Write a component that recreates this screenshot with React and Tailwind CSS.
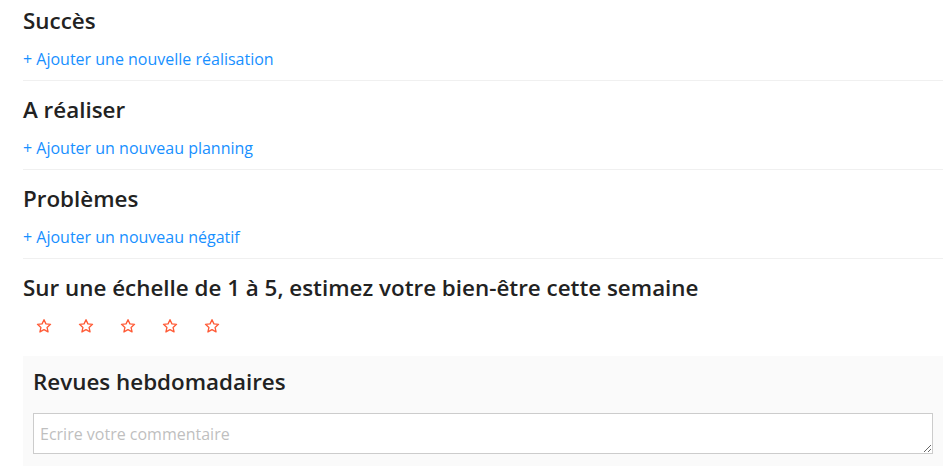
import React from "react";

const font = { fontFamily: '"Open Sans", "Noto Sans", sans-serif' };

function Star() {
  return (
    <svg width="16" height="16" viewBox="0 0 24 24" fill="none" stroke="#ff5a36" strokeWidth="2" strokeLinejoin="round">
      <path d="M12 2.5l2.9 6.3 6.9.7-5.2 4.6 1.5 6.8L12 17.4l-6.1 3.5 1.5-6.8-5.2-4.6 6.9-.7z" />
    </svg>
  );
}

function Section({ title, link, first }) {
  return (
    <div className={`${first ? "pt-[6px]" : "pt-[14px]"} pb-[9px] border-b border-[#f0f0f0]`}>
      <h2 className="text-[22.4px] leading-[30px] font-semibold text-[#222222]">{title}</h2>
      <div className="mt-[11px] text-[16px] leading-[24px] text-[#1890ff]">{link}</div>
    </div>
  );
}

export default function App() {
  return (
    <div className="w-[950px] h-[466px] overflow-hidden bg-white" style={font}>
      <div className="ml-[23px] w-[920px]">
        <Section first title="Succès" link="+ Ajouter une nouvelle réalisation" />
        <Section title="A réaliser" link="+ Ajouter un nouveau planning" />
        <Section title="Problèmes" link="+ Ajouter un nouveau négatif" />
        <div className="pt-[14px]">
          <h2 className="text-[22.4px] leading-[30px] font-semibold text-[#222222]">
            Sur une échelle de 1 à 5, estimez votre bien-être cette semaine
          </h2>
          <div className="mt-[15px] ml-[13px] flex gap-[26px]">
            <Star />
            <Star />
            <Star />
            <Star />
            <Star />
          </div>
        </div>
        <div className="mt-[22px] bg-[#fafafa] px-[10px] pt-[11px] pb-[20px]">
          <h2 className="text-[22.4px] leading-[30px] font-semibold text-[#222222]">Revues hebdomadaires</h2>
          <textarea
            className="mt-[16px] block w-[900px] h-[41px] border border-[#cccccc] bg-white px-[6px] pt-[8px] pb-[4px] text-[16px] leading-[24px] text-[#333] placeholder:text-[#bfbfbf] outline-none"
            placeholder="Ecrire votre commentaire"
            style={font}
          />
        </div>
      </div>
    </div>
  );
}
